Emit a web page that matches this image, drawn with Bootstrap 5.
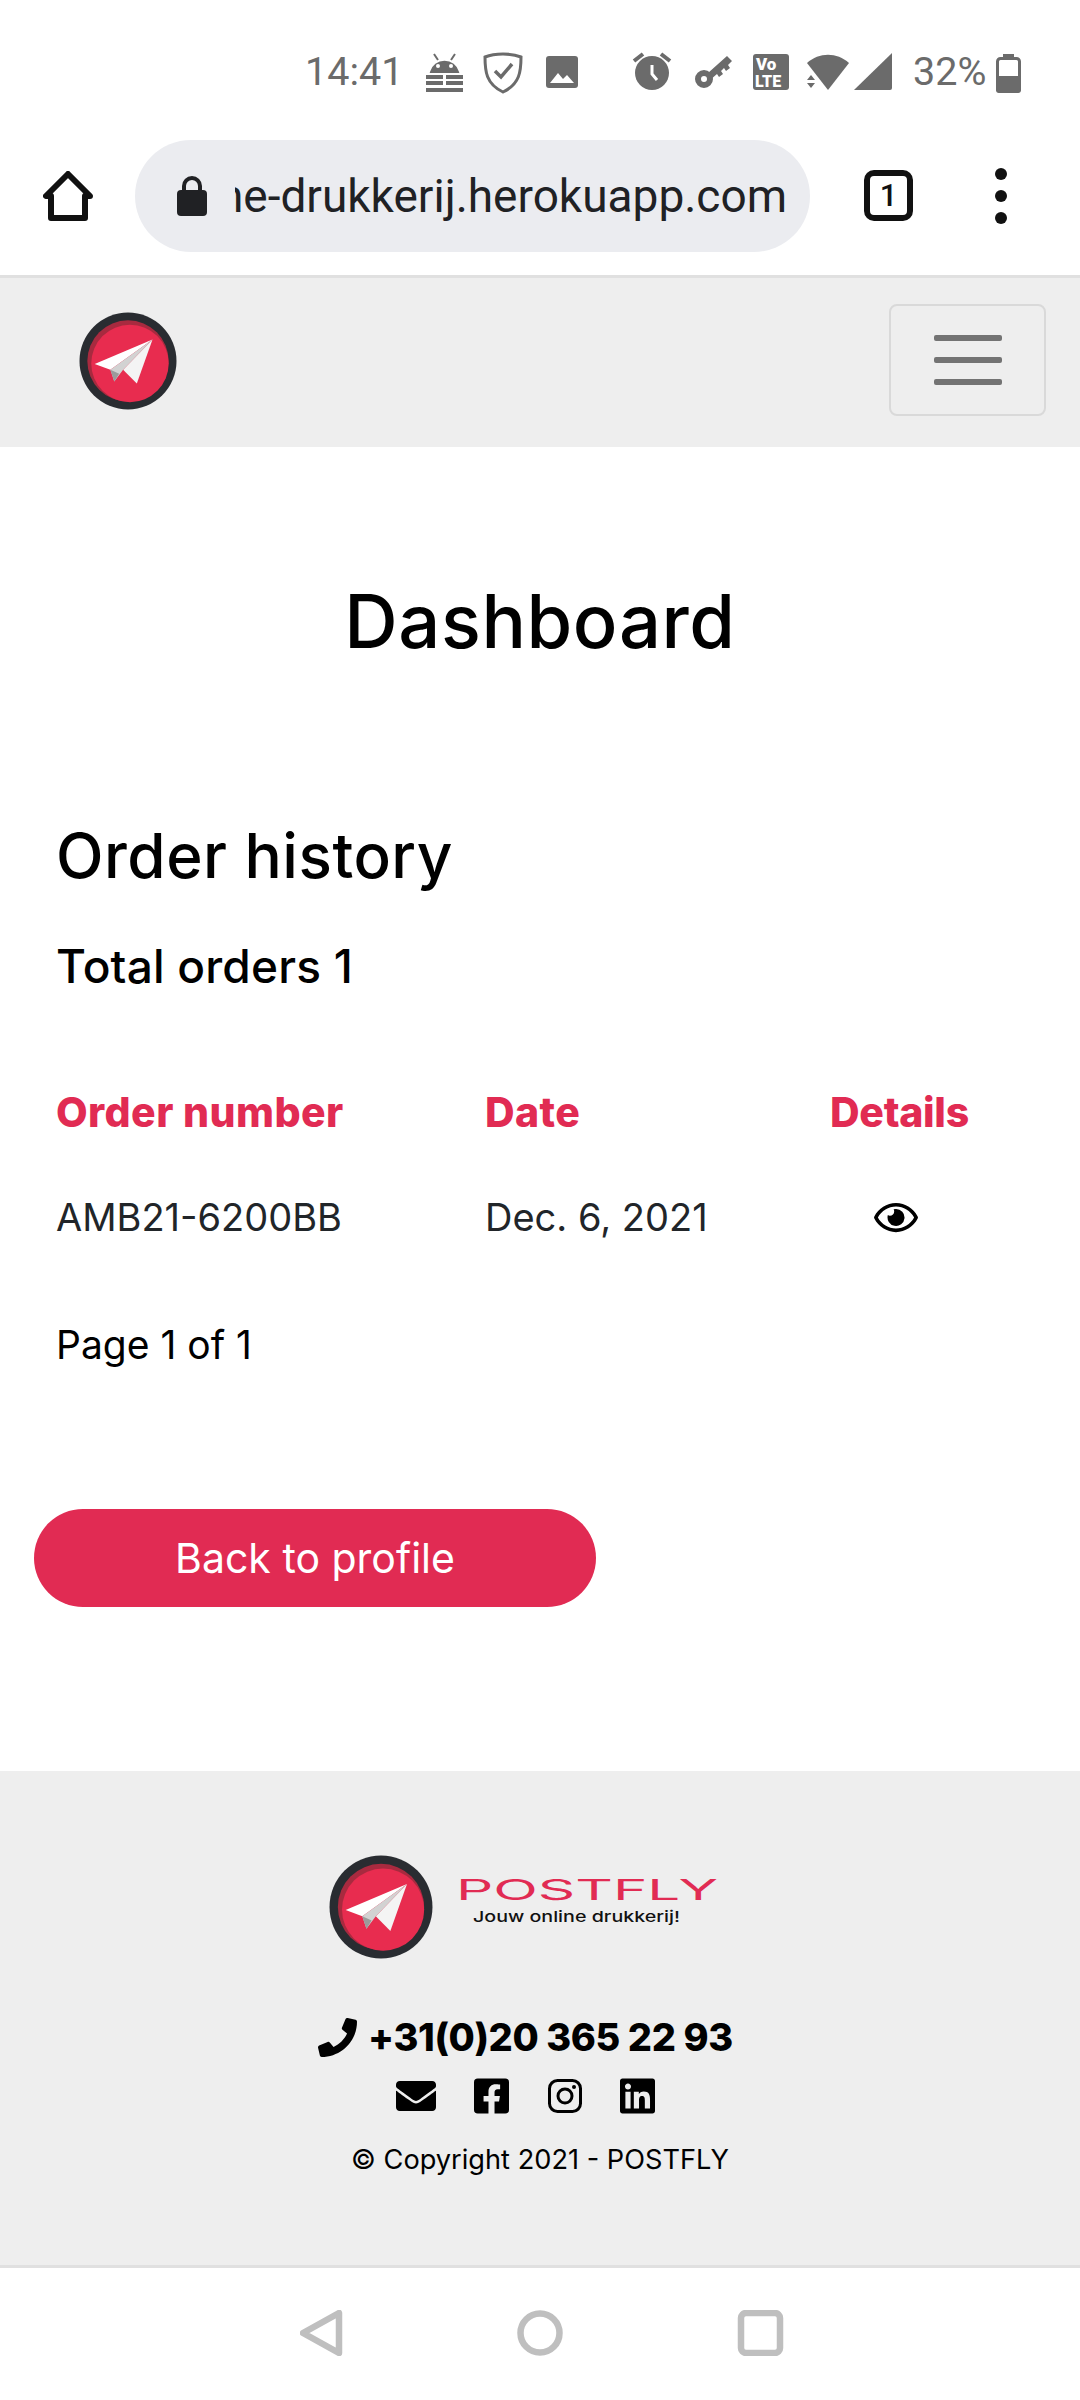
<!DOCTYPE html>
<html lang="en">
<head>
    <meta charset="UTF-8">
    <meta name="viewport" content="width=device-width, initial-scale=1.0">
    <title>Dashboard</title>
    <link href="https://cdn.jsdelivr.net/npm/bootstrap@5.3.0/dist/css/bootstrap.min.css" rel="stylesheet">
    <style>
        body {
            background-color: #fff;
            color: #000;
            font-family: Inter, "Noto Sans", sans-serif;
        }
        /* telefoon chrome */
        .status-strip {
            height: 140px;
            padding: 50px 59px 0 305px;
            font-family: Roboto, sans-serif;
            font-size: 39.5px;
            color: #6b6b6b;
            align-items: flex-start;
        }
        .status-time { width: 121px; line-height: 44px; }
        .status-pct { width: 83px; margin-left: 21px; line-height: 44px; white-space: nowrap; }
        .browser-bar {
            height: 138px;
            padding: 0 34px 24px 43px;
            border-bottom: 3px solid #e0e0e0;
        }
        .url-pill {
            width: 675px;
            height: 112px;
            margin-left: 42px;
            margin-right: 54px;
            background-color: #ebecf0;
            border-radius: 56px;
            padding: 0 21px 0 42px;
        }
        .url-clip {
            width: 552px;
            margin-left: 28px;
            overflow: hidden;
            white-space: nowrap;
            direction: rtl;
            font-family: Roboto, sans-serif;
            font-size: 46px;
            line-height: 60px;
            color: #202124;
        }
        /* site */
        .site-nav {
            height: 169px;
            background-color: #eee;
            padding: 0 34px 0 79px !important;
        }
        .site-nav .navbar-brand { margin-bottom: 3px !important; }
        .site-nav .navbar-toggler {
            width: 157px;
            height: 112px;
            margin-bottom: 5px;
            padding: 0;
            border: 2px solid #d9d9d9;
            border-radius: 8px;
        }
        .burger-line {
            display: block;
            width: 68px;
            height: 6px;
            margin: 0 auto 16px;
            background-color: #737373;
            border-radius: 2px;
        }
        .burger-line:last-child { margin-bottom: 0; }
        .page-title {
            margin: 0;
            padding-top: 131px;
            font-size: 74px;
            line-height: 86px;
            font-weight: 500;
            text-align: center;
            letter-spacing: .6px;
        }
        .page-body { padding: 152px 0 0 56px; height: 1107px; }
        .order-head {
            margin: 0;
            font-size: 62px;
            line-height: 80px;
            font-weight: 500;
            letter-spacing: .5px;
        }
        .order-count {
            margin: 40px 0 0;
            font-size: 46px;
            line-height: 60px;
            font-weight: 500;
            letter-spacing: .2px;
        }
        .order-table {
            width: 1024px;
            margin: 86px 0 0;
            table-layout: fixed;
            font-size: 38px;
        }
        .order-table th, .order-table td {
            padding: 0;
            border: 0;
            background: transparent;
            color: #212529;
        }
        .order-table th {
            height: 60px;
            color: #e12b53;
            font-weight: 800;
            font-size: 41px;
            letter-spacing: .4px;
        }
        .order-table th.col-details { letter-spacing: -.3px; }
        .order-table td { height: 148px; }
        .col-nr { width: 429px; }
        .col-date { width: 345px; }
        .order-table .eye-cell { padding-left: 44px; }
        .page-count { margin: 23px 0 0; font-size: 39px; line-height: 60px; }
        .back-btn {
            display: block;
            width: 562px;
            height: 98px;
            margin: 134px 0 0 -22px;
            padding: 0;
            background-color: #e12b53;
            border: 0;
            border-radius: 49px;
            color: #fff;
            font-size: 41px;
            line-height: 98px;
        }
        .site-foot {
            height: 497px;
            background-color: #eee;
            border-bottom: 3px solid #e0e0e0;
            padding-top: 84px;
        }
        .foot-brand { height: 104px; padding-left: 329px; }
        .foot-brand svg { display: block; }
        .foot-phone {
            margin-top: 58px;
            padding-left: 318px;
            height: 40px;
            font-size: 38px;
            font-weight: 800;
            line-height: 40px;
            letter-spacing: -.4px;
            white-space: nowrap;
        }
        .foot-phone svg { margin-right: 11px; }
        .foot-icons { margin-top: 22px; padding-left: 396px; height: 34px; }
        .foot-copy {
            margin: 28px 0 0;
            text-align: center;
            font-size: 27.2px;
            line-height: 38px;
        }
        .nav-strip { height: 132px; padding: 0 0 2px 3px; }
        .menu-dots { margin-left: 81px; }
        .fb-icon, .li-icon { margin-left: 38px; }
        .ig-icon { margin-left: 39px; }
    </style>
</head>
<body>
    <!-- statusbalk -->
    <div class="status-strip d-flex">
        <span class="status-time">14:41</span>
        <svg width="466" height="44" viewBox="426 50 466 44" fill="#6b6b6b">
            <!-- android slot -->
            <path d="M431 72a14 14 0 0 1 27 0zM434 54l4 6M455 54l-4 6" stroke="#6b6b6b" stroke-width="2"/>
            <circle cx="438" cy="66" r="2" fill="#fff"/><circle cx="451" cy="66" r="2" fill="#fff"/>
            <rect x="426" y="75" width="37" height="4"/><rect x="426" y="81" width="37" height="4"/><rect x="426" y="88" width="37" height="4"/>
            <rect x="443" y="73" width="3" height="13" fill="#fff"/>
            <!-- schild -->
            <path d="M503 54c7 0 13 1 18 3 0 14-1 27-18 35-17-8-18-21-18-35 5-2 11-3 18-3z" fill="none" stroke="#6b6b6b" stroke-width="3"/>
            <path d="M495 71l6 6 11-13" fill="none" stroke="#6b6b6b" stroke-width="3.5"/>
            <!-- plaatje -->
            <rect x="546" y="56" width="32" height="32" rx="3"/>
            <path d="M550 83l8-10 5 6 4-4 7 8z" fill="#fff"/>
            <!-- wekker -->
            <circle cx="652" cy="73" r="17"/>
            <path d="M634 61l9-7M670 61l-9-7" stroke="#6b6b6b" stroke-width="4"/>
            <path d="M652 65v9l5 6" fill="none" stroke="#fff" stroke-width="3"/>
            <!-- sleutel -->
            <circle cx="704" cy="79" r="6" fill="none" stroke="#6b6b6b" stroke-width="6"/>
            <path d="M708 73l19-17 5 5-4 4 2 3-4 3-2-3-3 3 2 3-4 3-2-3-7 6z"/>
            <!-- volte -->
            <rect x="753" y="54" width="36" height="36" rx="3"/>
            <text x="756" y="70" font-family="Roboto, sans-serif" font-weight="900" font-size="17" fill="#fff">Vo</text>
            <text x="755" y="87" font-family="Roboto, sans-serif" font-weight="900" font-size="16" fill="#fff">LTE</text>
            <!-- wifi en signaal -->
            <path d="M807 63c12-11 30-11 42 0l-21 27z"/>
            <path d="M811 75l4 5h-8zM811 88l4-5h-8z"/>
            <path d="M892 53v35a2 2 0 0 1-2 2h-36z"/>
        </svg>
        <span class="status-pct">32%</span>
        <svg width="25" height="40" viewBox="0 0 25 40" fill="#6b6b6b" class="mt-1">
            <rect x="7" y="0" width="11" height="4"/>
            <rect x="1.500" y="4.500" width="22" height="33" rx="3" fill="none" stroke="#6b6b6b" stroke-width="3"/>
            <rect x="0" y="22" width="25" height="17" rx="3"/>
        </svg>
    </div>

    <!-- browserbalk -->
    <div class="browser-bar d-flex align-items-center">
        <svg width="50" height="50" viewBox="0 0 50 50" fill="none" stroke="#111" stroke-width="6" stroke-linejoin="round" class="flex-shrink-0">
            <path d="M25 3L3 25h5v22h34V25h5z"/>
        </svg>
        <div class="url-pill d-flex align-items-center flex-shrink-0">
            <svg width="30" height="40" viewBox="0 0 30 40" fill="#202124" class="flex-shrink-0">
                <path d="M7 16v-6a8 8 0 0 1 16 0v6" fill="none" stroke="#202124" stroke-width="4"/>
                <rect x="0" y="14" width="30" height="26" rx="4"/>
            </svg>
            <div class="url-clip"><bdi>online-drukkerij.herokuapp.com</bdi></div>
        </div>
        <svg width="49" height="51" viewBox="0 0 49 51" class="flex-shrink-0">
            <rect x="3" y="3" width="43" height="45" rx="7" fill="none" stroke="#111" stroke-width="6"/>
            <text x="24.500" y="36" text-anchor="middle" font-family="Roboto, sans-serif" font-size="31" font-weight="500" fill="#111">1</text>
        </svg>
        <svg width="14" height="58" viewBox="0 0 14 58" fill="#111" class="flex-shrink-0 menu-dots">
            <circle cx="7" cy="7" r="6"/><circle cx="7" cy="29" r="6"/><circle cx="7" cy="51" r="6"/>
        </svg>
    </div>

    <!-- logo symbool -->
    <svg width="0" height="0" class="d-block">
        <symbol id="postfly-logo" viewBox="-50 -50 100 100">
            <circle r="49.500" fill="#292c31"/>
            <circle r="41.500" fill="#a82a3f"/>
            <circle cx="2" cy="2.500" r="39.500" fill="#e82c4f"/>
            <path d="M25-22L-34 3l16 6z" fill="#fff"/>
            <path d="M25-22L-5 9l14 14z" fill="#f4f4f4"/>
            <path d="M25-22L-18 9l4 12 9-12z" fill="#d2d2d2"/>
            <path d="M-18 9l4 12 5-8z" fill="#9b9b9b"/>
        </symbol>
    </svg>

    <nav class="navbar site-nav">
        <a class="navbar-brand p-0 ms-0 me-0 mt-0" href="#">
            <svg width="98" height="98" class="d-block"><use href="#postfly-logo"/></svg>
        </a>
        <button class="navbar-toggler" type="button">
            <span class="burger-line"></span>
            <span class="burger-line"></span>
            <span class="burger-line"></span>
        </button>
    </nav>

    <h1 class="page-title">Dashboard</h1>

    <main class="page-body">
        <h2 class="order-head">Order history</h2>
        <h3 class="order-count">Total orders 1</h3>

        <table class="table align-middle order-table">
            <thead>
                <tr>
                    <th class="col-nr">Order number</th>
                    <th class="col-date">Date</th>
                    <th class="col-details">Details</th>
                </tr>
            </thead>
            <tbody>
                <tr>
                    <td>AMB21-6200BB</td>
                    <td>Dec. 6, 2021</td>
                    <td class="eye-cell">
                        <svg width="44" height="39" viewBox="0 0 576 512" class="d-block">
                            <path d="M288 144a110.94 110.94 0 0 0-31.24 5 55.4 55.4 0 0 1 7.24 27 56 56 0 0 1-56 56 55.4 55.4 0 0 1-27-7.24A111.71 111.71 0 1 0 288 144zm284.52 97.4C518.29 135.59 410.93 64 288 64S57.68 135.64 3.48 241.41a32.35 32.35 0 0 0 0 29.19C57.71 376.41 165.07 448 288 448s230.32-71.64 284.52-177.41a32.35 32.35 0 0 0 0-29.19zM288 400c-98.65 0-189.09-55-237.93-144C98.91 167 189.34 112 288 112s189.09 55 237.93 144C477.1 345 386.66 400 288 400z"/>
                        </svg>
                    </td>
                </tr>
            </tbody>
        </table>

        <p class="page-count">Page 1 of 1</p>
        <a href="#" class="btn back-btn">Back to profile</a>
    </main>

    <footer class="site-foot">
        <div class="foot-brand d-flex">
            <svg width="104" height="104"><use href="#postfly-logo"/></svg>
            <svg width="300" height="104" viewBox="433 1855 300 104">
                <text x="456" y="1900" textLength="262" lengthAdjust="spacingAndGlyphs" font-family="Inter, sans-serif" font-size="28" font-weight="400" fill="#e12b53">POSTFLY</text>
                <text x="473" y="1922" textLength="207" lengthAdjust="spacingAndGlyphs" font-family="Inter, sans-serif" font-size="15" font-weight="500" fill="#111">Jouw online drukkerij!</text>
            </svg>
        </div>
        <div class="foot-phone d-flex align-items-center">
            <svg width="39" height="39" viewBox="0 0 512 512"><path d="M493.4 24.6l-104-24c-11.3-2.6-22.9 3.3-27.5 13.9l-48 112c-4.2 9.8-1.4 21.3 6.9 28l60.6 49.6c-36 76.7-98.9 140.5-177.2 177.2l-49.6-60.6c-6.8-8.3-18.2-11.1-28-6.9l-112 48C3.9 366.5-2 378.1.6 389.4l24 104C27.1 504.2 36.7 512 48 512c256.1 0 464-207.5 464-464 0-11.2-7.7-20.9-18.6-23.4z"/></svg>
            <span>+31(0)20 365 22 93</span>
        </div>
        <div class="foot-icons d-flex align-items-center">
            <svg width="40" height="40" viewBox="0 0 512 512"><path d="M502.3 190.8c3.9-3.1 9.7-.2 9.7 4.7V400c0 26.5-21.5 48-48 48H48c-26.5 0-48-21.5-48-48V195.6c0-5 5.700-7.800 9.700-4.700 22.400 17.400 52.100 39.500 154.100 113.600 21.100 15.400 56.700 47.800 92.200 47.600 35.700.3 72-32.800 92.300-47.600 102-74.100 131.600-96.300 154-113.700zM256 320c23.200.4 56.600-29.200 73.400-41.400 132.700-96.300 142.800-104.700 173.400-128.700 5.800-4.500 9.200-11.500 9.200-18.900v-19c0-26.500-21.500-48-48-48H48C21.500 64 0 85.500 0 112v19c0 7.400 3.400 14.300 9.200 18.900 30.600 23.900 40.700 32.400 173.400 128.700 16.800 12.200 50.200 41.800 73.400 41.400z"/></svg>
            <svg width="35" height="40" viewBox="0 0 448 512" class="fb-icon"><path d="M400 32H48A48 48 0 0 0 0 80v352a48 48 0 0 0 48 48h137.250V327.690h-63V256h63v-54.640c0-62.150 37-96.480 93.670-96.480 27.140 0 55.520 4.840 55.520 4.840v61h-31.270c-30.810 0-40.420 19.120-40.420 38.730V256h68.780l-11 71.690h-57.780V480H400a48 48 0 0 0 48-48V80a48 48 0 0 0-48-48z"/></svg>
            <svg width="34" height="34" viewBox="0 0 34 34" fill="none" stroke="#000" stroke-width="3" class="ig-icon">
                <rect x="1.500" y="1.500" width="31" height="31" rx="8"/>
                <circle cx="17" cy="17" r="7"/>
                <circle cx="26" cy="8" r="2" fill="#000" stroke="none"/>
            </svg>
            <svg width="35" height="40" viewBox="0 0 448 512" class="li-icon"><path d="M416 32H31.900C14.300 32 0 46.500 0 64.300v383.400C0 465.500 14.300 480 31.900 480H416c17.600 0 32-14.500 32-32.300V64.300c0-17.800-14.400-32.300-32-32.300zM135.400 416H69V202.200h66.500V416zm-33.200-243c-21.300 0-38.500-17.300-38.500-38.500S80.900 96 102.200 96c21.200 0 38.500 17.300 38.500 38.500 0 21.300-17.200 38.500-38.500 38.500zm282.100 243h-66.400V312c0-24.800-.5-56.700-34.500-56.700-34.600 0-39.900 27-39.900 54.900V416h-66.400V202.200h63.700v29.200h.9c8.900-16.800 30.600-34.500 62.900-34.500 67.200 0 79.700 44.300 79.700 101.900V416z"/></svg>
        </div>
        <p class="foot-copy">© Copyright 2021 - POSTFLY</p>
    </footer>

    <!-- navigatiebalk -->
    <div class="nav-strip d-flex justify-content-center align-items-center">
        <svg width="484" height="46" viewBox="0 0 484 46" fill="none" stroke="#bfbfbf" stroke-width="6.500" stroke-linejoin="round">
            <path d="M39 3v40L3 23z"/>
            <circle cx="240" cy="23" r="19.500"/>
            <rect x="441" y="3" width="39" height="40" rx="5"/>
        </svg>
    </div>

    <script src="https://cdn.jsdelivr.net/npm/bootstrap@5.3.0/dist/js/bootstrap.bundle.min.js"></script>
</body>
</html>
